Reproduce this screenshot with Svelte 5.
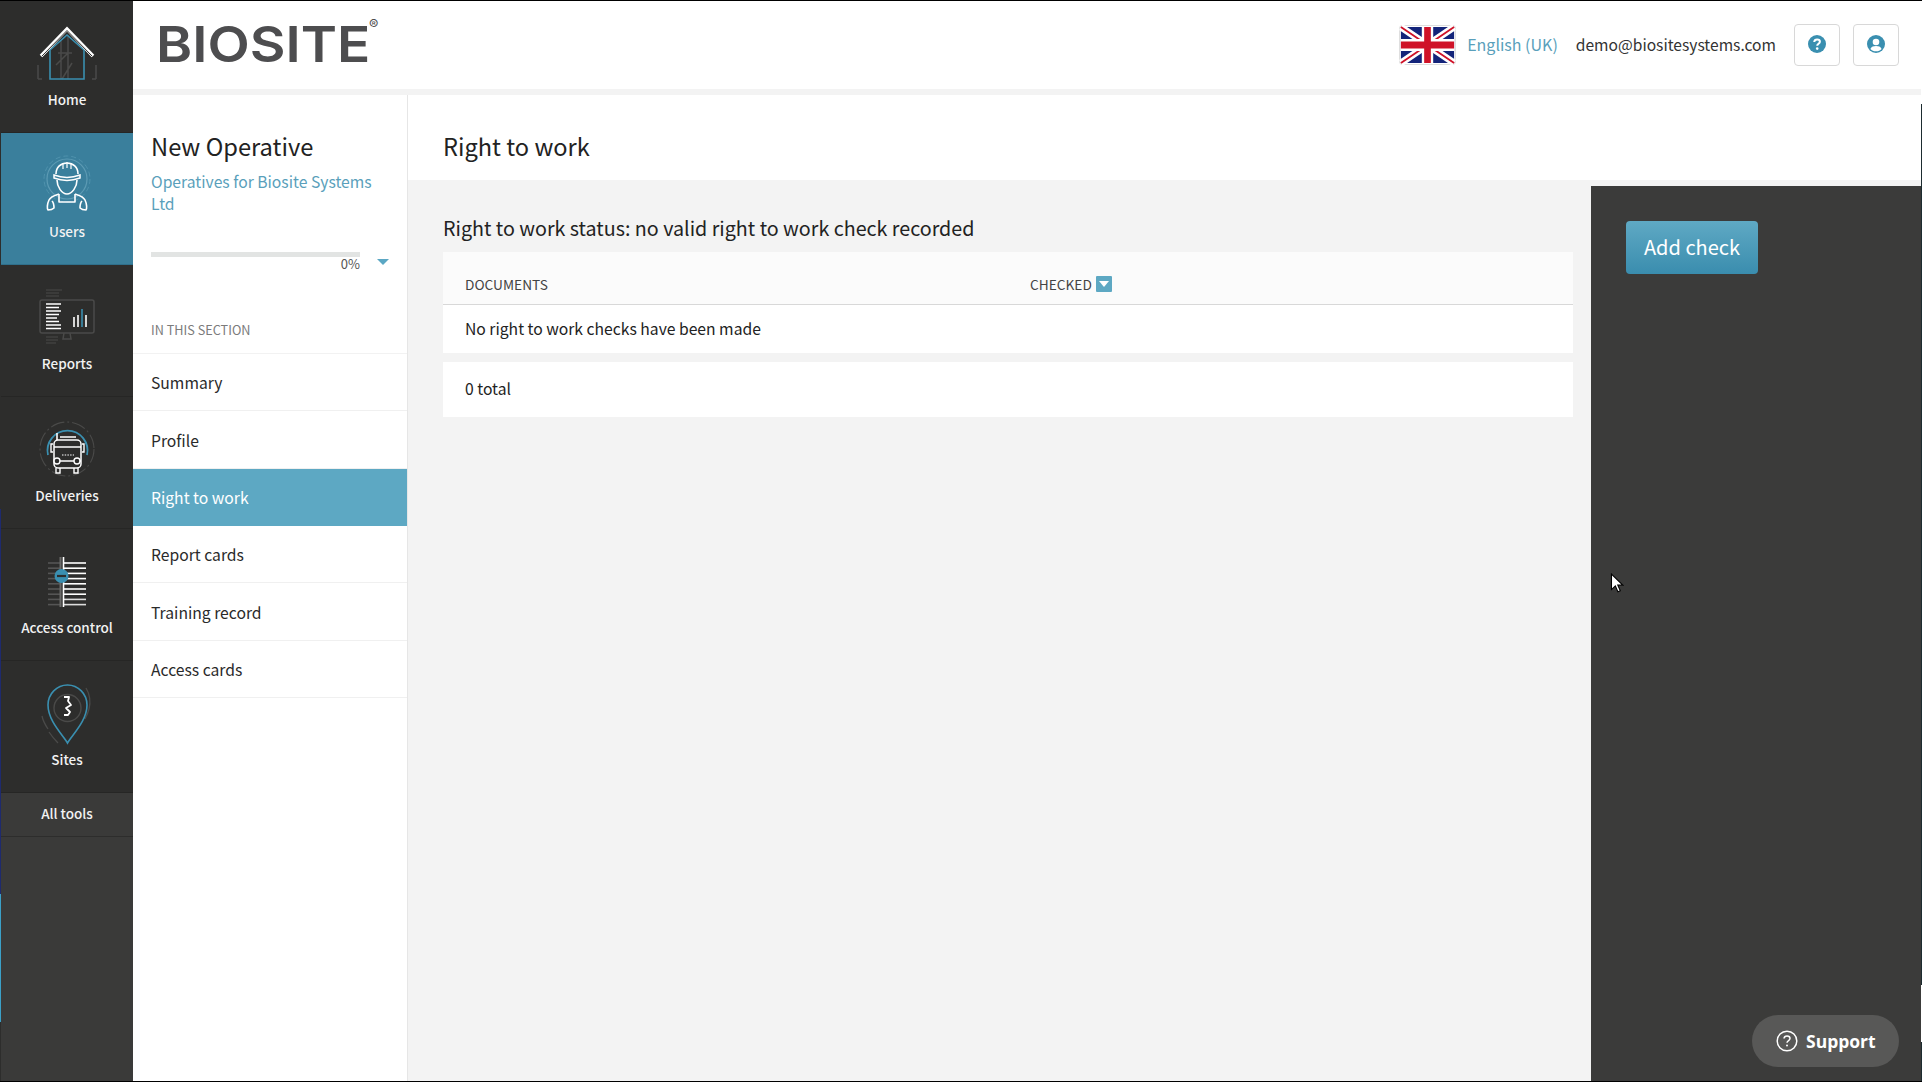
<script>
  const menu = [
    { label: 'Summary' },
    { label: 'Profile' },
    { label: 'Right to work', active: true },
    { label: 'Report cards' },
    { label: 'Training record' },
    { label: 'Access cards' }
  ];
  const rows = [0, 1, 2, 3, 4, 5, 6, 7, 8];
</script>

<div class="page">
  <nav class="nav">
    <a class="tool">
      <svg class="ico" viewBox="0 0 74 74" fill="none">
        <g stroke="#4a4a49" stroke-width="1.5">
          <path d="M8 64h4M62 64h4M8 50v14M66 50v14" />
          <path d="M31 26v38M38 20v44M28 38h14M26 50l12-12M32 64l10-16" />
        </g>
        <path d="M20 64V35L37 20l17 15v29z" stroke="#3a8fb0" stroke-width="1.6" />
        <path d="M11 41 37 14l26 27" stroke="#fff" stroke-width="3.6" stroke-linejoin="miter" />
        <path d="M12 41 37 15.500 62 41" stroke="#2d2d2c" stroke-width="1" />
      </svg>
      <span>Home</span>
    </a>
    <a class="tool on">
      <svg class="ico" viewBox="0 0 74 74" fill="none">
        <circle cx="37" cy="32" r="20" stroke="#5d9bb4" stroke-width="1.2" />
        <circle cx="37" cy="32" r="23" stroke="#4f92ad" stroke-width="1" stroke-dasharray="5 3" />
        <path d="M26 27c0-7 5-11 11-11s11 4 11 11" stroke="#fff" stroke-width="1.6" />
        <path d="M24 28c8 3 18 3 26 0l0 3c-8 3-18 3-26 0z" stroke="#fff" stroke-width="1.5" />
        <path d="M33 16v6M41 16v6M37 15v6" stroke="#fff" stroke-width="1.2" />
        <path d="M27 33c0 7 5 14 10 14s10-7 10-14" stroke="#fff" stroke-width="1.6" />
        <path d="M29 47v8h16v-8M29 47c-3 1-8 2-10 6-2 4-2 9-1 10 2 0 5-1 6-2 0-3-1-6-2-7M45 47c3 1 8 2 10 6 2 4 2 9 1 10-2 0-5-1-6-2 0-3 1-6 2-7" stroke="#fff" stroke-width="1.6" stroke-linejoin="round" />
      </svg>
      <span>Users</span>
    </a>
    <a class="tool">
      <svg class="ico" viewBox="0 0 74 74" fill="none">
        <rect x="10" y="21" width="54" height="33" rx="2" stroke="#4a4a49" stroke-width="1.5" />
        <path d="M34 54l-1 6h8l-1-6" stroke="#4a4a49" stroke-width="1.5" />
        <path d="M16 11h16M16 14h13M16 17h13M16 58h12M16 61h12M16 64h10" stroke="#4a4a49" stroke-width="1.2" />
        <path d="M16 25h15M16 28.500h13M16 32h15M16 35.500h13M16 39h11M16 42.500h13M16 46h15M16 49.500h15" stroke="#fff" stroke-width="1.6" />
        <path d="M44 38v10M48 36v12M56 36v12" stroke="#fff" stroke-width="1.6" />
        <path d="M52 30v18" stroke="#3a8fb0" stroke-width="1.6" />
      </svg>
      <span>Reports</span>
    </a>
    <a class="tool">
      <svg class="ico" viewBox="0 0 74 74" fill="none">
        <circle cx="37" cy="38" r="27" stroke="#4a4a49" stroke-width="1.100" stroke-dasharray="14 3 2 3" />
        <path d="M18 44A20 20 0 1 1 57 44" stroke="#3a8fb0" stroke-width="1.800" />
        <path d="M27 22v12" stroke="#fff" stroke-width="1.600" />
        <rect x="24" y="29" width="27" height="28" rx="4" fill="#2d2d2c" stroke="#fff" stroke-width="1.500" />
        <path d="M24 36h27M24 50h27M23 33h-2v8h2M52 33h2v8h-2M30 26h16" stroke="#fff" stroke-width="1.400" />
        <path d="M32 44h12" stroke="#bbb" stroke-width="1.400" stroke-dasharray="1.500 1.200" />
        <circle cx="27" cy="50" r="3" fill="#2d2d2c" stroke="#fff" stroke-width="1.400" />
        <circle cx="47" cy="50" r="3" fill="#2d2d2c" stroke="#fff" stroke-width="1.400" />
        <path d="M26 57v5h4v-5M44 57v5h4v-5" stroke="#fff" stroke-width="1.400" />
      </svg>
      <span>Deliveries</span>
    </a>
    <a class="tool">
      <svg class="ico" viewBox="0 0 74 74" fill="none">
        {#each rows as i}
          <path d={`M18 ${20 + i * 5.2}h12`} stroke="#555" stroke-width="1.600" />
          <path d={`M34 ${20 + i * 5.2}h22`} stroke={i > 6 ? '#ddd' : '#fff'} stroke-width="1.600" />
        {/each}
        <path d="M30.500 14v50" stroke="#6a6a69" stroke-width="2" />
        <path d="M33.500 14v50" stroke="#fff" stroke-width="1.600" />
        <circle cx="31.500" cy="33" r="7" fill="#3a8fb0" />
        <path d="M27 33h9" stroke="#2d2d2c" stroke-width="2.200" />
      </svg>
      <span>Access control</span>
    </a>
    <a class="tool">
      <svg class="ico" viewBox="0 0 74 74" fill="none">
        <path d="M18 54c-4-6-5-8-6-13M28 68c-3-3-5-5-9-11M56 13c3 5 5 13 3 21-1 4-2 6-4 10" stroke="#4a4a49" stroke-width="1.300" />
        <path d="M37.500 68C33 60 18 46 18 30a19.500 20 0 0 1 39 0c0 16-15 30-19.500 38z" stroke="#3a8fb0" stroke-width="1.600" />
        <circle cx="37.500" cy="33" r="13.500" stroke="#4a4a49" stroke-width="1.400" />
        <path d="M34 22h5l-1 4 3 4-5 3 4 4-2 3h-4" stroke="#fff" stroke-width="1.800" stroke-linejoin="round" />
      </svg>
      <span>Sites</span>
    </a>
    <a class="all">All tools</a>
  </nav>

  <div class="right">
    <header class="top">
      <div class="logo"><span class="word">BIOSITE</span><sup>®</sup></div>
      <div class="tools">
        <svg class="flag" viewBox="0 0 60 40" preserveAspectRatio="none">
          <rect x=".5" y=".5" width="59" height="39" rx="3" fill="#fff" stroke="#ddd" />
          <rect x="2" y="2" width="56" height="36" fill="#14247a" />
          <path d="M2 2l56 36M58 2 2 38" stroke="#fff" stroke-width="7" />
          <path d="M2 2l56 36M58 2 2 38" stroke="#cf1228" stroke-width="2" />
          <path d="M30 2v36M2 20h56" stroke="#fff" stroke-width="12" />
          <path d="M30 2v36M2 20h56" stroke="#cf1228" stroke-width="7" />
        </svg>
        <a class="lang">English (UK)</a>
        <span class="mail">demo@biositesystems.com</span>
        <button class="sq" aria-label="Help">
          <svg viewBox="0 0 18 18" width="18" height="18">
            <circle cx="9" cy="9" r="9" fill="#3a8fb0" />
            <path d="M6.200 7c.2-1.700 1.300-2.500 2.900-2.500 1.600 0 2.800.9 2.800 2.300 0 1.900-2.700 2-2.700 3.900" fill="none" stroke="#fff" stroke-width="2" />
            <circle cx="9.200" cy="13.600" r="1.300" fill="#fff" />
          </svg>
        </button>
        <button class="sq" aria-label="Account">
          <svg viewBox="0 0 18 18" width="18" height="18">
            <circle cx="9" cy="9" r="9" fill="#3a8fb0" />
            <circle cx="9" cy="7" r="3.300" fill="#fff" />
            <path d="M3.400 14c1-2.400 3-3 5.600-3s4.600.6 5.600 3c-1.400 1.500-3.400 2.300-5.600 2.300S4.800 15.500 3.400 14z" fill="#fff" />
          </svg>
        </button>
      </div>
    </header>

    <div class="body">
      <aside class="side">
        <div class="who">
          <h2>New Operative</h2>
          <a class="org">Operatives for Biosite Systems Ltd</a>
        </div>
        <div class="prog">
          <div class="barwrap">
            <div class="bar"></div>
            <div class="pct">0%</div>
          </div>
          <span class="tri"></span>
        </div>
        <div class="sect">IN THIS SECTION</div>
        <ul class="menu">
          {#each menu as m}
            <li class:active={m.active}>{m.label}</li>
          {/each}
        </ul>
      </aside>

      <main class="main">
        <div class="title"><h1>Right to work</h1></div>
        <div class="work">
          <section class="content">
            <h3>Right to work status: no valid right to work check recorded</h3>
            <div class="card">
              <div class="thead">
                <span class="c1">DOCUMENTS</span>
                <span class="c2">CHECKED</span>
                <span class="sort"></span>
              </div>
              <div class="tbody">No right to work checks have been made</div>
            </div>
            <div class="card total">0 total</div>
          </section>
          <aside class="panel">
            <button class="add">Add check</button>
            <button class="support">
              <svg viewBox="0 0 22 22" width="22" height="22" fill="none">
                <circle cx="11" cy="11" r="9.800" stroke="#fff" stroke-width="1.500" />
                <path d="M8 8.500C8.200 6.900 9.400 6 11 6c1.700 0 3 1 3 2.500 0 2-3 2.200-3 4.300" stroke="#fff" stroke-width="1.500" />
                <circle cx="11" cy="15.600" r="1" fill="#fff" />
              </svg>
              Support
            </button>
          </aside>
        </div>
      </main>
    </div>
  </div>

  <svg class="cursor" viewBox="0 0 12 19" width="14" height="21">
    <path d="M1 1v14l3.500-3.300 2.300 5.300 2.200-1-2.300-5h4.500z" fill="#fff" stroke="#000" stroke-width="1" />
  </svg>
</div>

<style>
  :global(body) { margin: 0; background: #fff; }
  * { box-sizing: border-box; }
  .page {
    position: relative;
    width: 1922px;
    height: 1082px;
    display: flex;
    overflow: hidden;
    border-top: 1px solid #000;
    border-bottom: 1px solid #000;
    font-family: "Noto Sans CJK SC", "Source Sans Pro", "Noto Sans", sans-serif;
    color: #222;
  }
  .page::after {
    content: "";
    position: absolute;
    top: 0;
    right: 0;
    bottom: 0;
    width: 1px;
    background: linear-gradient(#fff 0 103px, #1d2c30 103px 984px, #fff 984px 1041px, #1d2c30 1041px);
  }
  h1, h2, h3 { margin: 0; font-weight: 400; }
  button { font-family: inherit; border: 0; padding: 0; }

  .nav {
    width: 133px;
    flex: none;
    background: #3a3a39;
    color: #f2f2f2;
    border-left: 1px solid #2d2d2c;
    border-image: linear-gradient(#2d2d2c 0 47%, #1e2a6e 47% 82.600%, #3ba0c8 82.600% 94.500%, #2d2d2c 94.500%) 1;
  }
  .tool {
    height: 132px;
    display: flex;
    flex-direction: column;
    align-items: center;
    padding-top: 14px;
    background: #2d2d2c;
    border-bottom: 1px solid #262625;
    font-size: 13.500px;
    font-weight: 500;
    line-height: 20px;
  }
  .tool.on { background: #3a7f9c; border-bottom-color: #2f6f8b; }
  .ico { width: 74px; height: 74px; flex: none; }
  .all {
    display: block;
    height: 44px;
    line-height: 41px;
    text-align: center;
    font-size: 13.500px;
    font-weight: 500;
    background: #3a3a39;
    border-bottom: 1px solid #2d2d2c;
  }

  .right { flex: 1; display: flex; flex-direction: column; min-width: 0; background: #f3f3f3; }
  .top {
    height: 88px;
    flex: none;
    background: #fff;
    display: flex;
    align-items: center;
    justify-content: space-between;
    padding: 0 23px 0 23px;
    margin-bottom: 6px;
  }
  .logo {
    font-family: Inter, "Liberation Sans", Arial, sans-serif;
    font-weight: 600;
    font-size: 50px;
    line-height: 50px;
    color: #4d4d4f;
    position: relative;
    top: -1px;
  }
  .word {
    display: inline-block;
    transform: scaleX(1.100);
    transform-origin: left center;
  }
  .logo sup {
    position: absolute;
    top: -2px;
    left: 213px;
    font-size: 14px;
    line-height: 16px;
    font-weight: 400;
    vertical-align: baseline;
  }
  .tools { display: flex; align-items: center; }
  .flag { width: 57px; height: 40px; margin-right: 11px; }
  .lang { color: #5a9fbb; font-size: 16px; line-height: 24px; margin-right: 18px; padding-bottom: 2px; }
  .mail { color: #333; font-size: 15.600px; line-height: 24px; margin-right: 18px; padding-bottom: 2px; }
  .sq {
    width: 46px;
    height: 42px;
    background: #fff;
    border: 1px solid #d8d8d8;
    border-radius: 4px;
    display: flex;
    align-items: center;
    justify-content: center;
    padding-bottom: 2px;
  }
  .sq + .sq { margin-left: 13px; }

  .body { flex: 1; display: flex; min-height: 0; }
  .side {
    width: 275px;
    flex: none;
    background: #fff;
    border-right: 1px solid #e6e6e6;
  }
  .who { padding: 35px 18px 0; }
  .who h2 { font-size: 23.700px; line-height: 32px; color: #222; }
  .org { display: block; margin-top: 9px; font-size: 15.700px; line-height: 22px; color: #5a9fbb; }
  .prog { display: flex; padding: 37px 18px 0; gap: 17px; }
  .barwrap { width: 210px; }
  .bar { height: 5px; background: #e2e4e3; }
  .pct { font-size: 13px; line-height: 16px; text-align: right; color: #555; margin-top: -1px; }
  .tri {
    width: 0; height: 0; margin-top: 7px;
    border-left: 6px solid transparent;
    border-right: 6px solid transparent;
    border-top: 6px solid #5ba7c4;
  }
  .sect { padding: 49px 18px 0; font-size: 12.700px; line-height: 18px; color: #7b7b7b; height: 81px; }
  .menu { list-style: none; margin: 0; padding: 0; border-top: 1px solid #f2f2f2; }
  .menu li {
    height: 57.350px;
    display: flex;
    align-items: center;
    padding: 1px 18px 0;
    font-size: 15.700px;
    color: #2a2a2a;
    border-bottom: 1px solid #f0f0f0;
  }
  .menu li.active { background: #5da8c3; color: #fff; border-bottom-color: #5da8c3; }

  .main { flex: 1; display: flex; flex-direction: column; min-width: 0; }
  .title { height: 85px; flex: none; background: #fff; padding: 16px 35px 0; display: flex; align-items: center; }
  .title h1 { font-size: 23.600px; line-height: 32px; color: #222; }
  .work { flex: 1; display: flex; min-height: 0; background: #f3f3f3; }
  .content { flex: 1; padding: 33px 18px 0 35px; }
  .content h3 { font-size: 19.700px; line-height: 30px; color: #222; margin-bottom: 9px; }
  .card { background: #fff; }
  .thead {
    height: 53px;
    display: flex;
    align-items: flex-end;
    padding: 0 0 11px 22px;
    font-size: 13.700px;
    line-height: 18px;
    color: #444;
    background: #fbfbfb;
    border-bottom: 1px solid #d8d8d8;
  }
  .c1 { width: 565px; }
  .sort {
    width: 16px; height: 16px; margin-left: 4px; margin-bottom: 1px;
    background: #5da8c3;
    border-radius: 1px;
    position: relative;
  }
  .sort::after {
    content: "";
    position: absolute;
    left: 3px; top: 5px;
    border-left: 5px solid transparent;
    border-right: 5px solid transparent;
    border-top: 6px solid #fff;
  }
  .tbody { height: 48px; padding: 12px 22px 0; font-size: 15.700px; line-height: 24px; color: #222; }
  .total { margin-top: 9px; height: 55px; padding: 15px 22px 0; font-size: 15.700px; line-height: 24px; color: #222; }

  .panel {
    width: 331px;
    flex: none;
    margin-top: 6px;
    background: #3b3b3a;
    position: relative;
    padding: 35px 35px 0;
  }
  .add {
    width: 132px;
    height: 53px;
    border-radius: 4px;
    color: #fff;
    font-size: 20px;
    padding-bottom: 2px;
    background: linear-gradient(#5fa9c4, #3a8dae);
  }
  .support {
    position: absolute;
    right: 23px;
    bottom: 14px;
    width: 147px;
    height: 52px;
    border-radius: 26px;
    background: #585857;
    color: #fff;
    font-family: "Open Sans", sans-serif;
    font-weight: 700;
    font-size: 17.500px;
    display: flex;
    align-items: center;
    gap: 8px;
    padding-left: 24px;
  }
  .cursor { position: absolute; left: 1610px; top: 572px; }
</style>
